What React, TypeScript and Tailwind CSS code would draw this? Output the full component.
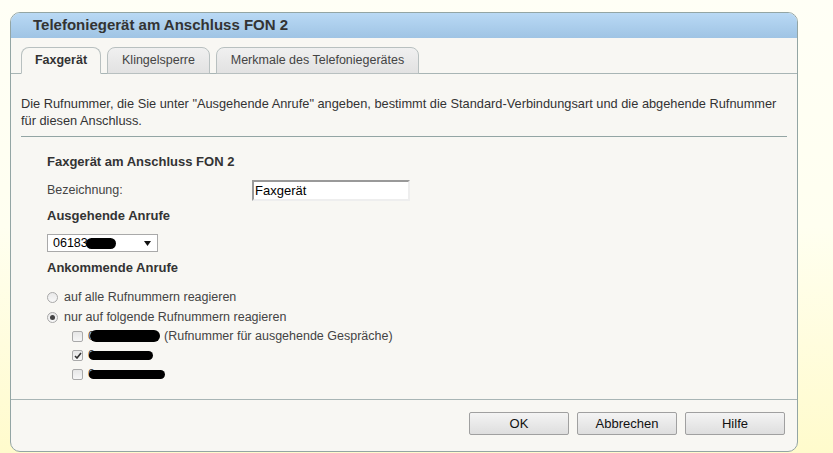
import { useState } from 'react';

function Blob({ className }: { className: string }) {
  return <span className={`absolute bg-black rounded-full ${className}`} />;
}

function Radio({ checked, label }: { checked?: boolean; label: string }) {
  return (
    <div className="flex items-center gap-[6px] h-[20px]">
      <span className="w-[11px] h-[11px] rounded-full border border-[#a9a9a9] bg-gradient-to-b from-[#e9e9e9] to-[#f8f8f8] flex items-center justify-center">
        {checked && <span className="w-[5px] h-[5px] rounded-full bg-[#444]" />}
      </span>
      <span>{label}</span>
    </div>
  );
}

function Check({ checked }: { checked?: boolean }) {
  return (
    <span className="w-[11px] h-[11px] shrink-0 rounded-[2px] border border-[#a9a9a9] bg-gradient-to-b from-[#e6e6e6] to-[#f6f6f6] flex items-center justify-center">
      {checked && (
        <svg width="8" height="7" viewBox="0 0 8 7">
          <path d="M1 4 L3 6 L7 1" fill="none" stroke="#333" strokeWidth="1.6" />
        </svg>
      )}
    </span>
  );
}

export default function App() {
  const [tab] = useState('fax');

  const tabs = [
    { id: 'fax', label: 'Faxgerät', w: 'w-[80px]' },
    { id: 'klingel', label: 'Klingelsperre', w: 'w-[103px]' },
    { id: 'merkmale', label: 'Merkmale des Telefoniegerätes', w: 'w-[203px]' },
  ];

  return (
    <div className="w-[833px] h-[453px] overflow-hidden bg-gradient-to-b from-[#fffff6] via-[#fffff0] to-[#fffbcc] pt-[12px] pl-[10px] font-['Liberation_Sans',Arial,sans-serif] text-[12.5px] text-[#333]">
      <div className="w-[788px] h-[440px] rounded-[10px] border border-[#93a5a4] bg-[#f8f7f3] overflow-hidden flex flex-col">
        {/* Header */}
        <div className="h-[25px] shrink-0 bg-gradient-to-b from-[#b9d9f5] to-[#9fc4e4] pl-[22px] flex items-center text-[15px] font-bold text-[#333]">
          Telefoniegerät am Anschluss FON 2
        </div>

        {/* Tabs */}
        <div className="h-[36px] shrink-0 flex items-end gap-[6px] pl-[10px] border-b border-[#a8b5b5]">
          {tabs.map((t) => (
            <div
              key={t.id}
              className={`${t.w} h-[27px] -mb-px rounded-t-[8px] border border-[#b8c0c0] flex items-center justify-center text-[12.5px] ${
                tab === t.id
                  ? 'bg-[#f8f7f3] border-b-[#f8f7f3] font-bold text-[#333]'
                  : 'bg-gradient-to-b from-[#f0f0f0] to-[#e2e2e2] text-[#444]'
              }`}
            >
              {t.label}
            </div>
          ))}
        </div>

        {/* Body */}
        <div className="flex-1 px-[10px] pt-[21px]">
          <p className="leading-[17px] text-[12.8px] text-[#333]">
            Die Rufnummer, die Sie unter "Ausgehende Anrufe" angeben, bestimmt die Standard-Verbindungsart und die abgehende Rufnummer für diesen Anschluss.
          </p>
          <div className="mt-[7px] border-t border-[#93a5a4]" />

          <div className="pl-[26px] pt-[17px]">
            <div className="font-bold text-[13px] leading-[16px]">Faxgerät am Anschluss FON 2</div>

            <div className="flex items-center mt-[10px] h-[21px]">
              <span className="w-[205px] text-[#444]">Bezeichnung:</span>
              <div className="w-[158px] h-[21px] bg-white border-2 border-t-[#999] border-l-[#999] border-r-[#eee] border-b-[#eee] flex items-center pl-[1px] text-[13px] text-black">
                Faxgerät
              </div>
            </div>

            <div className="font-bold text-[13px] mt-[6px] leading-[17px]">Ausgehende Anrufe</div>

            <div className="relative mt-[10px] w-[111px] h-[18px] border border-[#a9a9a9] bg-white flex items-center pl-[5px] text-[12.5px] text-black">
              <span>06183</span>
              <Blob className="left-[38px] top-[3px] w-[30px] h-[11px]" />
              <svg className="absolute right-[6px] top-[6px]" width="7" height="5" viewBox="0 0 7 5">
                <path d="M0 0 H7 L3.5 5 Z" fill="#111" />
              </svg>
            </div>

            <div className="font-bold text-[13px] mt-[7px] leading-[17px]">Ankommende Anrufe</div>

            <div className="mt-[11px] text-[#444]">
              <Radio label="auf alle Rufnummern reagieren" />
              <Radio checked label="nur auf folgende Rufnummern reagieren" />
              <div className="pl-[25px]">
                <div className="relative flex items-center gap-[5px] h-[19px]">
                  <Check />
                  <span className="w-[71px]">0</span>
                  <span>(Rufnummer für ausgehende Gespräche)</span>
                  <Blob className="left-[18px] top-[3px] w-[70px] h-[12px]" />
                </div>
                <div className="relative flex items-center gap-[5px] h-[19px]">
                  <Check checked />
                  <span>0</span>
                  <Blob className="left-[17px] top-[5px] w-[64px] h-[9px]" />
                </div>
                <div className="relative flex items-center gap-[5px] h-[19px]">
                  <Check />
                  <span>0</span>
                  <Blob className="left-[17px] top-[5px] w-[76px] h-[9px]" />
                </div>
              </div>
            </div>
          </div>
        </div>

        {/* Footer */}
        <div className="h-[52px] shrink-0 border-t border-[#a8b5b5] flex justify-end items-start gap-[8px] pr-[12px] pt-[12px]">
          {['OK', 'Abbrechen', 'Hilfe'].map((b) => (
            <button
              key={b}
              className="w-[100px] h-[23px] border border-[#a0a0a0] rounded-[2px] bg-gradient-to-b from-[#f4f4f4] to-[#dedede] text-[13px] text-[#111]"
            >
              {b}
            </button>
          ))}
        </div>
      </div>
    </div>
  );
}
